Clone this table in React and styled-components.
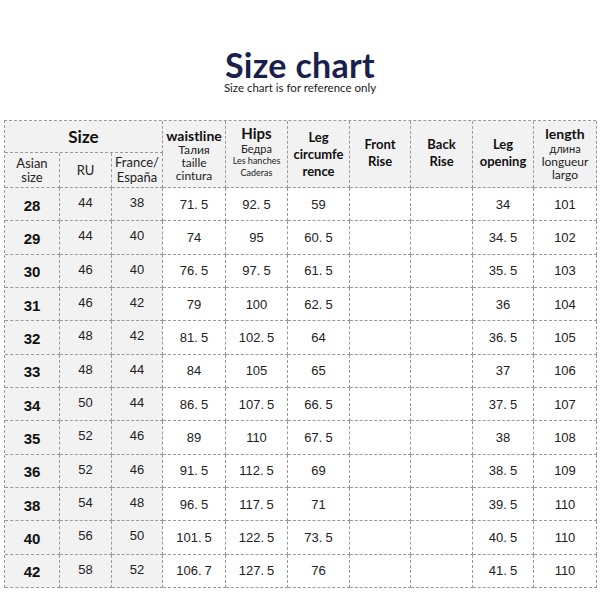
import React from "react";
import styled, { createGlobalStyle } from "styled-components";

const GlobalStyle = createGlobalStyle`
  html, body {
    margin: 0;
    padding: 0;
    background: #ffffff;
  }
  body {
    width: 600px;
    height: 600px;
    overflow: hidden;
  }
`;

const Page = styled.div`
  width: 600px;
  height: 600px;
  background: #fff;
  font-family: Lato, "Liberation Sans", sans-serif;
  color: #111;
`;

const TitleBlock = styled.div`
  display: flex;
  flex-direction: column;
  align-items: center;
  padding-top: 50px;
  height: 120px;
  box-sizing: border-box;
`;

const Title = styled.h1`
  margin: 0;
  font-family: Lato, "Open Sans", sans-serif;
  font-size: 34px;
  line-height: 30px;
  font-weight: 700;
  color: #1b1f4d;
  letter-spacing: 0.3px;
`;

const Subtitle = styled.div`
  margin-top: 2px;
  font-family: Lato, "Open Sans", sans-serif;
  font-size: 11.5px;
  line-height: 12px;
  color: #222;
`;

const Grid = styled.div`
  margin-left: 4px;
  display: grid;
  grid-template-columns: 55px 52px 51px 63px 62px 62px 61px 62px 61px 63px;
  grid-template-rows: 32px 35px repeat(12, 33.33px);
  border-top: 1px dashed #9a9a9a;
  border-left: 1px dashed #9a9a9a;
  width: 592px;
  box-sizing: border-box;
`;

const Cell = styled.div`
  box-sizing: border-box;
  border-right: 1px dashed #9a9a9a;
  border-bottom: 1px dashed #9a9a9a;
  background: ${(p) => (p.$shade ? "#f2f2f2" : "#ffffff")};
  display: flex;
  flex-direction: column;
  align-items: center;
  justify-content: ${(p) => (p.$top ? "flex-start" : "center")};
  padding-top: ${(p) => p.$pad || 0}px;
  text-align: center;
  grid-column: ${(p) => p.$col || "auto"};
  grid-row: ${(p) => p.$row || "auto"};
`;

const HeadBig = styled.div`
  font-weight: 700;
  font-size: ${(p) => p.$size || 14}px;
  line-height: ${(p) => p.$lh || 16}px;
  color: #111;
`;

const HeadSmall = styled.div`
  font-size: ${(p) => p.$size || 12}px;
  line-height: ${(p) => p.$lh || 13}px;
  color: #222;
  white-space: nowrap;
`;

const SizeNum = styled.div`
  font-family: "Liberation Sans", Arial, sans-serif;
  font-weight: 700;
  font-size: 15px;
  color: #111;
  margin-top: 2px;
`;

const Num = styled.div`
  font-family: "Liberation Sans", Arial, sans-serif;
  font-size: 13px;
  color: #222;
  margin-top: ${(p) => (p.$raise ? -3 : 0)}px;
`;

const Dot = styled.span`
  margin-right: 3px;
`;

const rows = [
  ["28", "44", "38", "71.5", "92.5", "59", "", "", "34", "101"],
  ["29", "44", "40", "74", "95", "60.5", "", "", "34.5", "102"],
  ["30", "46", "40", "76.5", "97.5", "61.5", "", "", "35.5", "103"],
  ["31", "46", "42", "79", "100", "62.5", "", "", "36", "104"],
  ["32", "48", "42", "81.5", "102.5", "64", "", "", "36.5", "105"],
  ["33", "48", "44", "84", "105", "65", "", "", "37", "106"],
  ["34", "50", "44", "86.5", "107.5", "66.5", "", "", "37.5", "107"],
  ["35", "52", "46", "89", "110", "67.5", "", "", "38", "108"],
  ["36", "52", "46", "91.5", "112.5", "69", "", "", "38.5", "109"],
  ["38", "54", "48", "96.5", "117.5", "71", "", "", "39.5", "110"],
  ["40", "56", "50", "101.5", "122.5", "73.5", "", "", "40.5", "110"],
  ["42", "58", "52", "106.7", "127.5", "76", "", "", "41.5", "110"],
];

const formatNum = (v) => {
  if (!v.includes(".")) return v;
  const [a, b] = v.split(".");
  return (
    <>
      {a}
      <Dot>.</Dot>
      {b}
    </>
  );
};

export default function App() {
  return (
    <Page>
      <GlobalStyle />
      <TitleBlock>
        <Title>Size chart</Title>
        <Subtitle>Size chart is for reference only</Subtitle>
      </TitleBlock>
      <Grid>
        <Cell $shade $col="1 / span 3" $row="1">
          <HeadBig $size={17}>Size</HeadBig>
        </Cell>
        <Cell $shade $col="4" $row="1 / span 2" $top $pad={7}>
          <HeadBig $size={14} $lh={15}>waistline</HeadBig>
          <HeadSmall $size={12} $lh={13}>Талия</HeadSmall>
          <HeadSmall $size={12} $lh={13}>taille</HeadSmall>
          <HeadSmall $size={12} $lh={13}>cintura</HeadSmall>
        </Cell>
        <Cell $shade $col="5" $row="1 / span 2" $top $pad={4}>
          <HeadBig $size={15} $lh={17}>Hips</HeadBig>
          <HeadSmall $size={11} $lh={13}>Бедра</HeadSmall>
          <HeadSmall $size={9} $lh={12}>Les hanches</HeadSmall>
          <HeadSmall $size={9} $lh={12}>Caderas</HeadSmall>
        </Cell>
        <Cell $shade $col="6" $row="1 / span 2">
          <HeadBig $size={13} $lh={17}>Leg</HeadBig>
          <HeadBig $size={13} $lh={17}>circumfe</HeadBig>
          <HeadBig $size={13} $lh={17}>rence</HeadBig>
        </Cell>
        <Cell $shade $col="7" $row="1 / span 2" $top $pad={15}>
          <HeadBig $size={13} $lh={17}>Front</HeadBig>
          <HeadBig $size={13} $lh={17}>Rise</HeadBig>
        </Cell>
        <Cell $shade $col="8" $row="1 / span 2" $top $pad={15}>
          <HeadBig $size={13} $lh={17}>Back</HeadBig>
          <HeadBig $size={13} $lh={17}>Rise</HeadBig>
        </Cell>
        <Cell $shade $col="9" $row="1 / span 2" $top $pad={15}>
          <HeadBig $size={13} $lh={17}>Leg</HeadBig>
          <HeadBig $size={13} $lh={17}>opening</HeadBig>
        </Cell>
        <Cell $shade $col="10" $row="1 / span 2" $top $pad={4}>
          <HeadBig $size={14} $lh={17}>length</HeadBig>
          <HeadSmall $size={11} $lh={13}>длина</HeadSmall>
          <HeadSmall $size={12} $lh={13}>longueur</HeadSmall>
          <HeadSmall $size={12} $lh={13}>largo</HeadSmall>
        </Cell>
        <Cell $shade $col="1" $row="2">
          <HeadSmall $size={13} $lh={14}>Asian</HeadSmall>
          <HeadSmall $size={13} $lh={14}>size</HeadSmall>
        </Cell>
        <Cell $shade $col="2" $row="2">
          <HeadSmall $size={13} $lh={14}>RU</HeadSmall>
        </Cell>
        <Cell $shade $col="3" $row="2">
          <HeadSmall $size={13} $lh={15}>France/</HeadSmall>
          <HeadSmall $size={13} $lh={15}>España</HeadSmall>
        </Cell>
        {rows.map((r) =>
          r.map((v, i) => (
            <Cell key={r[0] + "-" + i} $shade={i < 3}>
              {i === 0 ? (
                <SizeNum>{v}</SizeNum>
              ) : (
                <Num $raise={i < 3}>{formatNum(v)}</Num>
              )}
            </Cell>
          ))
        )}
      </Grid>
    </Page>
  );
}
